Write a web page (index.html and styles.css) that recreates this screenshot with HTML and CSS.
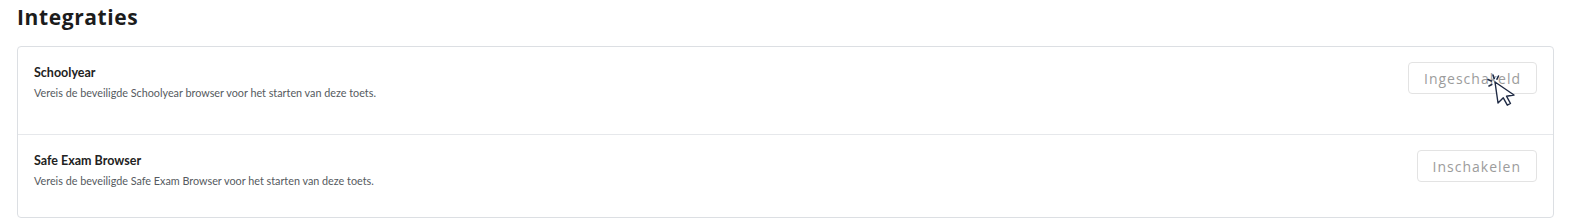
FILE: index.html
```html
<!DOCTYPE html>
<html lang="nl">
<head>
<meta charset="utf-8">
<title>Integraties</title>
<link rel="stylesheet" href="styles.css">
</head>
<body>
<div class="page">
  <h2 class="heading">Integraties</h2>
  <div class="card">
    <div class="row">
      <div class="info">
        <div class="title">Schoolyear</div>
        <div class="desc">Vereis de beveiligde Schoolyear browser voor het starten van deze toets.</div>
      </div>
      <div class="action">
        <button class="btn">Ingeschakeld</button>
        <svg class="cursor" width="34" height="36" viewBox="0 0 34 36">
          <g stroke="#1f2a44" stroke-width="1.6" stroke-linecap="round">
            <line x1="6" y1="1" x2="7.2" y2="4.5"/>
            <line x1="1" y1="5.5" x2="4.3" y2="7"/>
            <line x1="11.5" y1="2" x2="10" y2="5.2"/>
            <line x1="2" y1="12" x2="4.8" y2="10.5"/>
          </g>
          <path d="M8 8 L27 21 L19.5 22.2 L23.5 29.5 L20.3 31.2 L16.3 23.8 L11 29 Z" fill="#ffffff" stroke="#1f2a44" stroke-width="1.4" stroke-linejoin="round"/>
        </svg>
      </div>
    </div>
    <div class="row">
      <div class="info">
        <div class="title">Safe Exam Browser</div>
        <div class="desc">Vereis de beveiligde Safe Exam Browser voor het starten van deze toets.</div>
      </div>
      <div class="action">
        <button class="btn">Inschakelen</button>
      </div>
    </div>
  </div>
</div>
</body>
</html>
```
FILE: styles.css
```css
html, body {
  margin: 0;
  padding: 0;
  background: #ffffff;
}
.page {
  padding: 0 38px 0 17px;
}
.heading {
  margin: 0;
  padding-top: 4px;
  height: 42px;
  font-family: "Open Sans", sans-serif;
  font-weight: 700;
  font-size: 21px;
  line-height: 26px;
  color: #1c1c1c;
  letter-spacing: 0.6px;
}
.card {
  border: 1px solid #dcdfe3;
  border-radius: 4px;
  background: #ffffff;
}
.row {
  display: flex;
  justify-content: space-between;
  align-items: flex-start;
  padding: 15px 16px 0 16px;
}
.row:first-child {
  height: 72px;
}
.row + .row {
  border-top: 1px solid #e6e8eb;
  height: 67px;
}
.title {
  font-family: "Lato", sans-serif;
  font-weight: 700;
  font-size: 12.5px;
  line-height: 20px;
  color: #222222;
  margin-top: 1px;
}
.desc {
  font-family: "Lato", sans-serif;
  font-size: 10.8px;
  line-height: 14px;
  color: #555a60;
  margin-top: 3px;
}
.action {
  position: relative;
}
.btn {
  font-family: "Open Sans", sans-serif;
  font-size: 14px;
  font-weight: 500;
  letter-spacing: 1px;
  color: #9c9c9c;
  background: #ffffff;
  border: 1px solid #e3e3e3;
  border-radius: 4px;
  height: 32px;
  padding: 0 15px;
  cursor: default;
}
.cursor {
  position: absolute;
  left: 79px;
  top: 12px;
}
```
